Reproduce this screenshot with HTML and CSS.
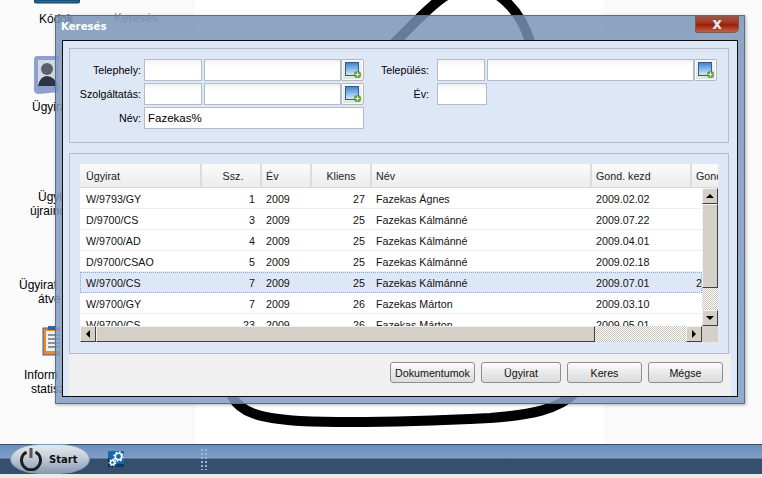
FILE: index.html
```html
<!DOCTYPE html>
<html lang="hu">
<head>
<meta charset="utf-8">
<title>Keresés</title>
<link rel="stylesheet" href="styles.css">
</head>
<body>
<div class="desktop">
  <div class="wallpaper"></div>
  <svg class="scribble" width="762" height="478" viewBox="0 0 762 478" aria-hidden="true">
    <path d="M395 42 C420 18 445 -12 470 -14 C495 -14 520 8 530 42" class="ink"/>
    <path d="M232 396 C240 412 258 418 300 421 C360 424 430 421 490 418 C530 415 558 410 576 392" class="ink"/>
  </svg>

  <div class="dicon di-book"><svg width="46" height="4" viewBox="0 0 46 4"><path d="M0 0H46V1Q46 3 44 3H2Q0 3 0 1Z" fill="#1c6fa8" stroke="#16384f"/></svg></div>
  <div class="dlabel dl-kodok">Kódok</div>
  <div class="dlabel dl-keres">Keresés</div>

  <div class="dicon di-user"><svg width="26" height="42" viewBox="0 0 26 42"><path d="M4 2H26V38L6 40Q1 40 1 36V6Q1 2 4 2Z" fill="#8ea0d0"/><rect x="5" y="6" width="21" height="26" fill="#d4d8e0"/><circle cx="14" cy="15" r="6" fill="#5a5f6c"/><path d="M5 32Q7 22 14 22Q21 22 25 32Z" fill="#2c3446"/></svg></div>
  <div class="dlabel dl-ugyi">Ügyira</div>
  <div class="dlabel dl-ujra1">Ügyi</div>
  <div class="dlabel dl-ujra2">újrainc</div>
  <div class="dlabel dl-atv1">Ügyirat</div>
  <div class="dlabel dl-atv2">átvé</div>
  <div class="dicon di-clip"><svg width="18" height="30" viewBox="0 0 18 30"><rect x="1" y="2" width="17" height="27" fill="#e98a25" stroke="#3c5fb0"/><rect x="4" y="5" width="14" height="20" fill="#eef0f2"/><path d="M6 9H18M6 13H18M6 17H18M6 21H18" stroke="#8a929c" stroke-width="2"/><rect x="6" y="0" width="7" height="4" fill="#3c5fb0"/></svg></div>
  <div class="dlabel dl-inf1">Inform</div>
  <div class="dlabel dl-inf2">statisz</div>

  <section class="window">
    <header class="titlebar">
      <h1 class="title">Keresés</h1>
      <button class="close" type="button" aria-label="Bezárás">x</button>
    </header>
    <div class="client">
      <div class="content">
        <form class="filters">
          <div class="fcol">
            <div class="frow">
              <label class="lbl">Telephely:</label>
              <input class="inp w-code" type="text">
              <div class="combo w-l">
                <input class="inp grow" type="text">
                <button class="pick" type="button" aria-label="Választ"><svg width="16" height="16" viewBox="0 0 16 16"><use href="#pickicon"/></svg></button>
              </div>
            </div>
            <div class="frow">
              <label class="lbl">Szolgáltatás:</label>
              <input class="inp w-code" type="text">
              <div class="combo w-l">
                <input class="inp grow" type="text">
                <button class="pick" type="button" aria-label="Választ"><svg width="16" height="16" viewBox="0 0 16 16"><use href="#pickicon"/></svg></button>
              </div>
            </div>
            <div class="frow">
              <label class="lbl">Név:</label>
              <input class="inp w-name" type="text" value="Fazekas%">
            </div>
          </div>
          <div class="fcol fcol-r">
            <div class="frow">
              <label class="lbl lbl-r">Település:</label>
              <input class="inp w-code-r" type="text">
              <div class="combo w-r">
                <input class="inp grow" type="text">
                <button class="pick" type="button" aria-label="Választ"><svg width="16" height="16" viewBox="0 0 16 16"><use href="#pickicon"/></svg></button>
              </div>
            </div>
            <div class="frow">
              <label class="lbl lbl-r">Év:</label>
              <input class="inp w-year" type="text">
            </div>
          </div>
        </form>

        <div class="results">
          <div class="grid">
            <div class="thead">
              <div class="th c1">Ügyirat</div>
              <div class="th c2 center ssz">Ssz.</div>
              <div class="th c3">Év</div>
              <div class="th c4 center">Kliens</div>
              <div class="th c5">Név</div>
              <div class="th c6">Gond. kezd</div>
              <div class="th c7">Gond. vég</div>
            </div>
            <div class="tbody">
              <div class="tr"><div class="td c1">W/9793/GY</div><div class="td c2 num">1</div><div class="td c3">2009</div><div class="td c4 num">27</div><div class="td c5">Fazekas Ágnes</div><div class="td c6">2009.02.02</div><div class="td c7"></div></div>
              <div class="tr"><div class="td c1">D/9700/CS</div><div class="td c2 num">3</div><div class="td c3">2009</div><div class="td c4 num">25</div><div class="td c5">Fazekas Kálmánné</div><div class="td c6">2009.07.22</div><div class="td c7"></div></div>
              <div class="tr"><div class="td c1">W/9700/AD</div><div class="td c2 num">4</div><div class="td c3">2009</div><div class="td c4 num">25</div><div class="td c5">Fazekas Kálmánné</div><div class="td c6">2009.04.01</div><div class="td c7"></div></div>
              <div class="tr"><div class="td c1">D/9700/CSAO</div><div class="td c2 num">5</div><div class="td c3">2009</div><div class="td c4 num">25</div><div class="td c5">Fazekas Kálmánné</div><div class="td c6">2009.02.18</div><div class="td c7"></div></div>
              <div class="tr selected"><div class="td c1">W/9700/CS</div><div class="td c2 num">7</div><div class="td c3">2009</div><div class="td c4 num">25</div><div class="td c5">Fazekas Kálmánné</div><div class="td c6">2009.07.01</div><div class="td c7">2009</div></div>
              <div class="tr"><div class="td c1">W/9700/GY</div><div class="td c2 num">7</div><div class="td c3">2009</div><div class="td c4 num">26</div><div class="td c5">Fazekas Márton</div><div class="td c6">2009.03.10</div><div class="td c7"></div></div>
              <div class="tr"><div class="td c1">W/9700/CS</div><div class="td c2 num">23</div><div class="td c3">2009</div><div class="td c4 num">26</div><div class="td c5">Fazekas Márton</div><div class="td c6">2009.05.01</div><div class="td c7"></div></div>
            </div>
            <div class="vscroll">
              <div class="sbtn"><span class="arr up"></span></div>
              <div class="sthumb v-thumb"></div>
              <div class="strack grow"></div>
              <div class="sbtn"><span class="arr down"></span></div>
            </div>
            <div class="hscroll">
              <div class="sbtn"><span class="arr left"></span></div>
              <div class="sthumb h-thumb"></div>
              <div class="strack grow"></div>
              <div class="sbtn"><span class="arr right"></span></div>
            </div>
            <div class="corner"></div>
          </div>
        </div>

        <footer class="actions">
          <button class="btn b-doc" type="button">Dokumentumok</button>
          <button class="btn b-ugy" type="button">Ügyirat</button>
          <button class="btn b-ker" type="button">Keres</button>
          <button class="btn b-meg" type="button">Mégse</button>
        </footer>
      </div>
    </div>
  </section>

  <nav class="taskbar">
    <button class="start" type="button">
      <svg width="24" height="24" viewBox="0 0 24 24"><path d="M7.500 5A9.500 9.500 0 1 0 16.500 5" fill="none" stroke="#1d1d1d" stroke-width="3"/><path d="M12 1V11" stroke="#555" stroke-width="3"/></svg>
      <span class="start-text">Start</span>
    </button>
    <div class="quick"><svg width="16" height="16" viewBox="0 0 16 16"><rect width="16" height="16" rx="1" fill="#1468ac"/><path d="M0 16V6L6 16Z" fill="#0a3050"/><path d="M6 16H16V13H9Z" fill="#0a3a6c"/><circle cx="10.500" cy="5.500" r="3.200" fill="none" stroke="#fff" stroke-width="1.600"/><circle cx="10.500" cy="5.500" r="4.600" fill="none" stroke="#fff" stroke-width="1.400" stroke-dasharray="1.800 1.800"/><circle cx="4.500" cy="11.500" r="2" fill="none" stroke="#fff" stroke-width="1.400"/><circle cx="4.500" cy="11.500" r="3.200" fill="none" stroke="#fff" stroke-width="1.200" stroke-dasharray="1.500 1.400"/></svg></div>
    <div class="grip"></div>
  </nav>
  <div class="strip"></div>
</div>

<svg width="0" height="0" class="defs" aria-hidden="true">
  <defs>
    <linearGradient id="pickfill" x1="0" y1="0" x2="0" y2="1">
      <stop offset="0" stop-color="#3f80c8"/>
      <stop offset=".55" stop-color="#8cc0e8"/>
      <stop offset="1" stop-color="#dcebf6"/>
    </linearGradient>
    <g id="pickicon">
      <rect x=".5" y=".5" width="13" height="13" fill="url(#pickfill)" stroke="#2a5aa8"/>
      <circle cx="12.500" cy="12.500" r="3.500" fill="#5f9e34"/>
      <path d="M12.500 10.500V14.500M10.500 12.500H14.500" stroke="#fff" stroke-width="1.200"/>
    </g>
  </defs>
</svg>
</body>
</html>
```

FILE: styles.css
```css
* { box-sizing: border-box; }
html, body { margin: 0; padding: 0; }
body { width: 762px; height: 478px; overflow: hidden; font-family: "Liberation Sans", Arial, sans-serif; font-size: 10.7px; color: #000; }
.desktop { position: relative; width: 762px; height: 478px; overflow: hidden; background: #fafafa; }
.wallpaper { position: absolute; left: 195px; top: 0; width: 409px; height: 444px; background: #fff; }
.scribble { position: absolute; left: 0; top: 0; }
.ink { fill: none; stroke: #000; stroke-width: 10; stroke-linecap: round; }
.defs { position: absolute; }

.dicon { position: absolute; line-height: 0; }
.di-book { left: 34px; top: 0; }
.di-user { left: 33px; top: 54px; }
.di-clip { left: 42px; top: 326px; }
.dlabel { position: absolute; font-family: "Liberation Sans", sans-serif; font-size: 12px; line-height: 14px; white-space: nowrap; color: #000; }
.dl-kodok { left: 39px; top: 12px; }
.dl-keres { left: 114px; top: 11px; color: #8a8f96; }
.dl-ugyi { left: 32px; top: 100px; }
.dl-ujra1 { left: 38px; top: 190px; }
.dl-ujra2 { left: 30px; top: 204px; }
.dl-atv1 { left: 19px; top: 278px; }
.dl-atv2 { left: 38px; top: 292px; }
.dl-inf1 { left: 24px; top: 368px; }
.dl-inf2 { left: 31px; top: 382px; }

.window { position: absolute; left: 55px; top: 15px; width: 690px; height: 389px; padding: 0 6px 6px; display: flex; flex-direction: column; background: linear-gradient(rgba(118, 146, 182, .84), rgba(122, 148, 184, .84) 24px, rgba(128, 156, 192, .84)); border: 1px solid #5b6f8b; box-shadow: 1px 1px 3px rgba(0, 0, 0, .3); }
.titlebar { height: 24px; flex: none; display: flex; justify-content: space-between; align-items: flex-start; margin: 0 -1px; }
.title { margin: 4px 0 0; font-family: "DejaVu Sans", sans-serif; font-size: 10.2px; font-weight: 700; line-height: 14px; color: #fff; }
.close { width: 44px; height: 17px; margin: 0; padding: 0; border: 1px solid #7d5a50; border-top: 0; border-radius: 0 0 5px 2px; background: linear-gradient(#95594a, #a83d26 35%, #9c1f08 55%, #c0614a); color: #e8e8ee; font: 700 15px/14px "DejaVu Sans", sans-serif; text-shadow: 0 0 1px #444; }
.client { flex: 1; min-height: 0; border: 1px solid #0d0d0d; background: #dee7f6; }
.content { height: 100%; display: flex; flex-direction: column; padding: 7px 6px 0 6px; }

.filters { flex: none; height: 95px; width: 660px; border: 1px solid #b4bccc; display: flex; padding: 10px 0 0 0; }
.fcol { width: 295px; display: flex; flex-direction: column; gap: 2px; }
.fcol-r { width: 360px; }
.frow { display: flex; align-items: stretch; height: 22px; }
.lbl { width: 74px; padding-right: 3px; text-align: right; line-height: 22px; white-space: nowrap; }
.lbl-r { width: 72px; padding-right: 8px; flex: none; }
.inp { border: 1px solid #b4bccc; background: linear-gradient(#f0f0f0, #fff 6px); font: 11.500px "Liberation Sans", sans-serif; padding: 0 3px; height: 22px; color: #000; border-radius: 0; }
.w-code { width: 58px; margin-right: 2px; }
.w-l { width: 160px; }
.combo { display: flex; flex: none; }
.grow { flex: 1; min-width: 0; }
.w-name { width: 220px; background: #fff; }
.w-code-r { width: 48px; margin-right: 2px; }
.w-r { width: 230px; }
.w-year { width: 50px; }
.pick { width: 23px; height: 22px; flex: none; padding: 0 0 0 1px; border: 1px solid #b8b8b8; border-radius: 2px; background: linear-gradient(#f6f6f6, #e2e2e2); box-shadow: inset 0 0 0 1px #fff; display: flex; align-items: center; justify-content: center; }

.results { flex: none; margin-top: 10px; width: 660px; height: 201px; border: 1px solid #b4bccc; padding: 10px 0 0 10px; }
.grid { position: relative; width: 638px; height: 178px; display: grid; grid-template-columns: 622px 16px; grid-template-rows: 24px 138px 16px; background: #fff; overflow: hidden; }
.thead { grid-column: 1 / 3; display: flex; background: linear-gradient(#fbfbfb, #f4f4f4 48%, #ececec); border-bottom: 1px solid #d8d8d8; }
.th { height: 23px; line-height: 25px; padding-left: 4px; border-left: 2px solid #dcdcdc; flex: none; white-space: nowrap; overflow: hidden; color: #222; }
.th.c1 { border-left: 0; padding-left: 6px; }
.th.center { text-align: center; padding-left: 0; }
.th.ssz { padding-left: 4px; }
.c1 { width: 120px; }
.c2 { width: 60px; }
.c3 { width: 50px; }
.c4 { width: 60px; }
.c5 { width: 220px; }
.c6 { width: 100px; }
.c7 { width: 50px; }
.tbody { overflow: hidden; }
.tr { display: flex; height: 21px; border-bottom: 1px solid #eeeeee; background: #fff; }
.tr.selected { background: #dee7f6; outline: 1px dotted #88a8e0; outline-offset: -1px; border-bottom-color: transparent; }
.td { line-height: 22px; height: 20px; padding-left: 6px; white-space: nowrap; overflow: hidden; flex: none; color: #111; }
.td.num { text-align: right; padding: 0 5px 0 0; }
.vscroll { display: flex; flex-direction: column; background-color: #d4d0c8; background-image: conic-gradient(#fff 25%, #c8c4bc 0 50%, #fff 0 75%, #c8c4bc 0); background-size: 2px 2px; }
.hscroll { display: flex; background-color: #d4d0c8; background-image: conic-gradient(#fff 25%, #c8c4bc 0 50%, #fff 0 75%, #c8c4bc 0); background-size: 2px 2px; }
.corner { background: #d4d0c8; }
.sbtn { width: 16px; height: 16px; flex: none; background: #d4d0c8; border: 1px solid; border-color: #f4f2ee #404040 #404040 #f4f2ee; display: flex; align-items: center; justify-content: center; }
.sthumb { flex: none; background: #d4d0c8; border: 1px solid; border-color: #f4f2ee #404040 #404040 #f4f2ee; }
.v-thumb { height: 84px; }
.h-thumb { width: 499px; }
.arr { width: 0; height: 0; border: 4px solid transparent; }
.up { border-bottom-color: #000; border-top-width: 0; }
.down { border-top-color: #000; border-bottom-width: 0; }
.left { border-right-color: #000; border-left-width: 0; }
.right { border-left-color: #000; border-right-width: 0; }

.actions { flex: 1; width: 662px; padding: 8px 0 0 0; background: #f0f0f0; display: flex; }
.btn { height: 21px; padding: 0; border: 1px solid #8d8d8d; border-radius: 3px; background: linear-gradient(#fdfdfd, #e9e9e9 50%, #dcdcdc); font: 10.700px "Liberation Sans", sans-serif; color: #111; flex: none; }
.b-doc { width: 85px; margin-left: 321px; }
.b-ugy { width: 80px; margin-left: 6px; }
.b-ker { width: 75px; margin-left: 6px; }
.b-meg { width: 75px; margin-left: 6px; }

.taskbar { position: absolute; left: 0; top: 444px; width: 762px; height: 30px; display: flex; align-items: center; background: linear-gradient(#2f4d72 0, #2f4d72 1px, #6c8ebc 1px, #7e9ec8 14px, #374f6f 15px, #374f6f 100%); }
.start { width: 80px; height: 30px; margin-left: 10px; padding: 0 0 0 8px; border: 1px solid #7f9ac0; border-radius: 30px / 15px; display: flex; align-items: center; gap: 6px; background: linear-gradient(#e4e8ee, #c4ccd8 45%, #8a9ab2); }
.start-text { font: 700 10px "DejaVu Sans", sans-serif; color: #111; }
.quick { margin-left: 18px; line-height: 0; }
.grip { width: 8px; height: 22px; margin-left: 76px; background-image: radial-gradient(#9fb4d0 1px, transparent 1px); background-size: 4px 4px; }
.strip { position: absolute; left: 0; top: 474px; width: 762px; height: 4px; background: #ecebe0; }
```
